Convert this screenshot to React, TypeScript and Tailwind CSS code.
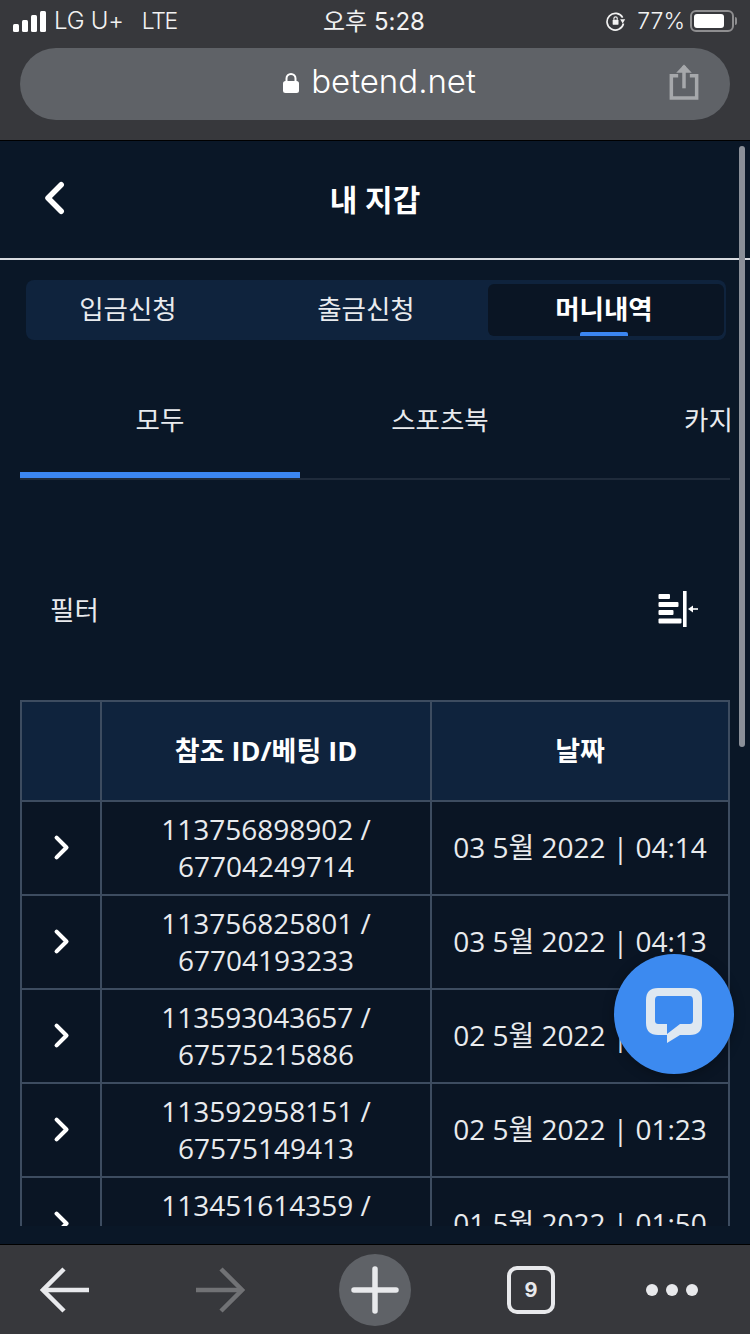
import React from "react";

const KR = "font-['Open_Sans','Noto_Sans_CJK_KR',sans-serif]";
const rows = [
  ["113756898902", "67704249714", "03 5월 2022 | 04:14"],
  ["113756825801", "67704193233", "03 5월 2022 | 04:13"],
  ["113593043657", "67575215886", "02 5월 2022 | 01:25"],
  ["113592958151", "67575149413", "02 5월 2022 | 01:23"],
  ["113451614359", "67470000000", "01 5월 2022 | 01:50"],
];

function Signal() {
  return (
    <div className="flex items-end gap-[3px] h-[22px]">
      <div className="w-[6px] h-[8px] rounded-[1.5px] bg-white" />
      <div className="w-[6px] h-[12px] rounded-[1.5px] bg-white" />
      <div className="w-[6px] h-[17px] rounded-[1.5px] bg-white" />
      <div className="w-[6px] h-[21px] rounded-[1.5px] bg-white" />
    </div>
  );
}

function Chevron({ className, left }: { className: string; left?: boolean }) {
  return (
    <svg viewBox="0 0 20 30" className={className} fill="none" stroke="#fff" strokeWidth="4.6" strokeLinecap="round" strokeLinejoin="round">
      <path d={left ? "M16 4 L5 15 L16 26" : "M4 4 L15 15 L4 26"} />
    </svg>
  );
}

export default function App() {
  return (
    <div className={`relative w-[750px] h-[1334px] overflow-hidden flex flex-col bg-[#0a1727] text-white ${KR}`}>
      {/* Browser chrome */}
      <div className="h-[141px] shrink-0 bg-[#37383c] border-b-[1px] border-black flex flex-col font-['Inter','Noto_Sans_CJK_KR',sans-serif]">
        <div className="relative h-[48px] flex items-center justify-between pl-[13px] pr-[13px] pb-[6px] text-[#f2f2f2]">
          <div className="flex items-center gap-[8px] text-[24px] font-light">
            <Signal />
            <span className="tracking-[-0.2px]">LG U+</span>
            <span className="ml-[10px] text-[23px] tracking-[-1.4px]">LTE</span>
          </div>
          <div className="absolute left-[323px] top-[7px] text-[24px] font-normal leading-[30px]">오후 5:28</div>
          <div className="flex items-center text-[23px] font-light">
            <svg viewBox="0 0 24 24" className="w-[20px] h-[20px] mr-[11px]" fill="none" stroke="#f2f2f2" strokeWidth="2">
              <path d="M20 8 A10 10 0 1 0 21 15" />
              <path d="M17 10 L23 10 L20 15 Z" fill="#f2f2f2" stroke="none" />
              <rect x="8" y="10.5" width="7" height="6" rx="1" fill="#f2f2f2" stroke="none" />
              <path d="M9.5 10.5 V9 a2 2 0 0 1 4 0 V10.5" strokeWidth="1.4" />
            </svg>
            <span>77%</span>
            <div className="flex items-center gap-[1px] ml-[5px]">
              <div className="w-[44px] h-[22px] rounded-[6px] border-[2px] border-[#8e8e90] p-[2px]">
                <div className="w-[30px] h-full rounded-[3px] bg-white" />
              </div>
              <div className="w-[2px] h-[8px] rounded-r-[2px] bg-[#8e8e90]" />
            </div>
          </div>
        </div>
        <div className="relative mx-[20px] h-[72px] rounded-[36px] bg-[#5f6267] flex items-center justify-center">
          <div className="flex items-center gap-[12px] pl-[9px] pb-[6px]">
            <svg viewBox="0 0 16 20" className="w-[16px] h-[20px] mt-[3px]" fill="#fff">
              <rect x="0" y="8" width="16" height="12" rx="2.5" />
              <path d="M3.5 9 V5.5 a4.5 4.5 0 0 1 9 0 V9" fill="none" stroke="#fff" strokeWidth="2" />
            </svg>
            <span className="text-[33px] font-light leading-[40px]">betend.net</span>
          </div>
          <svg viewBox="0 0 30 38" className="absolute right-[31px] top-[15px] w-[30px] h-[37px]" fill="none" stroke="#a6a8ab" strokeWidth="3.6">
            <path d="M9 13 H2 V36 H28 V13 H21" />
            <path d="M15 26 V3" />
            <path d="M7 10 L15 1.5 L23 10 Z" fill="#a6a8ab" stroke="none" />
          </svg>
        </div>
      </div>

      {/* Page */}
      <div className="relative flex-1 min-h-0 flex flex-col bg-[#0a1727]">
        <div className="h-[119px] shrink-0 relative flex items-center justify-center border-b-[2px] border-[#d8dbe0]">
          <Chevron left className="absolute left-[42px] top-[39px] w-[24px] h-[36px]" />
          <span className="text-[30px] font-bold leading-[36px]">내 지갑</span>
        </div>

        <div className="ml-[26px] mt-[20px] w-[700px] h-[60px] shrink-0 rounded-[8px] bg-[#0f233d] flex items-center text-[26.5px]">
          <div className="w-[204px] text-center text-[#e9ebee]">입금신청</div>
          <div className="w-[258px] text-center pl-[14px] text-[#e9ebee]">출금신청</div>
          <div className="relative w-[236px] h-[52px] rounded-[6px] bg-[#0a1524] flex items-center justify-center font-bold pr-[4px]">
            머니내역
            <div className="absolute left-[92px] bottom-0 w-[48px] h-[4px] rounded-t-[2px] bg-[#3b86f2]" />
          </div>
        </div>

        <div className="mx-[20px] mt-[32px] shrink-0 border-b-[2px] border-[#1f2b3b]">
          <div className="flex overflow-hidden h-[106px] text-[26.5px] text-[#e9ebee]">
            <div className="relative w-[280px] shrink-0 pt-[29px] text-center">
              모두
              <div className="absolute left-0 right-0 bottom-0 h-[6px] bg-[#3b86f2]" />
            </div>
            <div className="w-[280px] shrink-0 pt-[29px] text-center">스포츠북</div>
            <div className="w-[280px] shrink-0 pt-[29px] pl-[104px] whitespace-nowrap">카지노</div>
          </div>
        </div>

        <div className="h-[220px] shrink-0 flex items-center justify-between pl-[50px] pr-[52px] pt-[38px]">
          <span className="text-[26.5px] text-[#e9ebee] mt-[3px]">필터</span>
          <svg viewBox="0 0 40 36" className="w-[40px] h-[36px]" fill="#fff">
            <rect x="0.5" y="3" width="11.5" height="5" rx="1" />
            <rect x="0.5" y="11" width="20" height="5" rx="1" />
            <rect x="0.5" y="19" width="15" height="5" rx="1" />
            <rect x="0.5" y="27.5" width="23" height="5" rx="1" />
            <rect x="25" y="0" width="3.6" height="36" />
            <rect x="33" y="17.2" width="7" height="1.6" />
            <path d="M30 18 L35 14.5 V21.5 Z" />
          </svg>
        </div>

        <div className="mx-[20px] h-[526px] shrink-0 overflow-hidden">
          <table className="w-[710px] table-fixed border-separate border-spacing-0 border-t-[2px] border-l-[2px] border-[#3d4c60] text-[28px] text-[#e9ebee] bg-[#0a1524]">
            <colgroup>
              <col className="w-[80px]" />
              <col className="w-[330px]" />
              <col className="w-[298px]" />
            </colgroup>
            <thead>
              <tr className="h-[100px] bg-[#0f233d] text-white">
                <th className="border-r-[2px] border-b-[2px] border-[#3d4c60]" />
                <th className="border-r-[2px] border-b-[2px] border-[#3d4c60] text-[27px] font-bold">참조 ID/베팅 ID</th>
                <th className="border-r-[2px] border-b-[2px] border-[#3d4c60] text-[27px] font-bold">날짜</th>
              </tr>
            </thead>
            <tbody>
              {rows.map((r) => (
                <tr key={r[0]} className="h-[94px]">
                  <td className="border-r-[2px] border-b-[2px] border-[#3d4c60]">
                    <div className="flex justify-center pl-[1px] pb-[2px]">
                      <Chevron className="w-[18px] h-[27px]" />
                    </div>
                  </td>
                  <td className="border-r-[2px] border-b-[2px] border-[#3d4c60] text-center leading-[37px] px-[4px]">
                    {r[0]} /<br />
                    {r[1]}
                  </td>
                  <td className="border-r-[2px] border-b-[2px] border-[#3d4c60] text-center whitespace-nowrap pb-[2px]">{r[2]}</td>
                </tr>
              ))}
            </tbody>
          </table>
        </div>

        {/* Scrollbar overlay */}
        <div className="absolute right-[5px] top-[5px] w-[6px] h-[601px] rounded-[3px] bg-[#8a8f98]" />

        {/* Chat button overlay */}
        <div className="absolute left-[614px] top-[813px] w-[120px] h-[120px] rounded-full bg-[#3c8af0] flex items-center justify-center shadow-[0_2px_12px_rgba(0,0,0,0.3)]">
          <svg viewBox="0 0 56 55" className="w-[56px] h-[55px] mt-[2px]">
            <path
              fillRule="evenodd"
              fill="#dfe8f1"
              d="M12 0 H44 C52 0 56 4 56 12 V35 C56 43 52 47 44 47 H34 L21 55 V47 H12 C4 47 0 43 0 35 V12 C0 4 4 0 12 0 Z M13 8 C10 8 9 9 9 13 V32 C9 35 10 36 13 36 H21 V46 L34 36 H43 C46 36 47 35 47 32 V13 C47 9 46 8 43 8 Z"
            />
          </svg>
        </div>
      </div>

      {/* Bottom toolbar */}
      <div className="h-[90px] shrink-0 bg-[#37383c] border-t-[1px] border-black flex items-center justify-start pl-[40px] font-['Inter',sans-serif]">
        <svg viewBox="0 0 50 46" className="w-[50px] h-[46px]" fill="none" stroke="#e8e9ec" strokeWidth="4.5">
          <path d="M24 2 L3 23 L24 44" />
          <path d="M3 23 H49" />
        </svg>
        <svg viewBox="0 0 50 46" className="w-[50px] h-[46px] ml-[105px]" fill="none" stroke="#717275" strokeWidth="4.5">
          <path d="M26 2 L47 23 L26 44" />
          <path d="M47 23 H1" />
        </svg>
        <div className="w-[72px] h-[72px] rounded-full bg-[#5f6267] ml-[94px] flex items-center justify-center">
          <svg viewBox="0 0 48 48" className="w-[48px] h-[48px]" stroke="#e8e9ec" strokeWidth="5.5" strokeLinecap="round">
            <path d="M24 3 V45 M3 24 H45" />
          </svg>
        </div>
        <div className="w-[48px] h-[48px] ml-[96px] rounded-[10px] border-[4px] border-[#e8e9ec] flex items-center justify-center text-[20px] font-bold text-[#e8e9ec]">9</div>
        <div className="flex gap-[8px] ml-[91px]">
          <div className="w-[12px] h-[12px] rounded-full bg-[#e8e9ec]" />
          <div className="w-[12px] h-[12px] rounded-full bg-[#e8e9ec]" />
          <div className="w-[12px] h-[12px] rounded-full bg-[#e8e9ec]" />
        </div>
      </div>
    </div>
  );
}
